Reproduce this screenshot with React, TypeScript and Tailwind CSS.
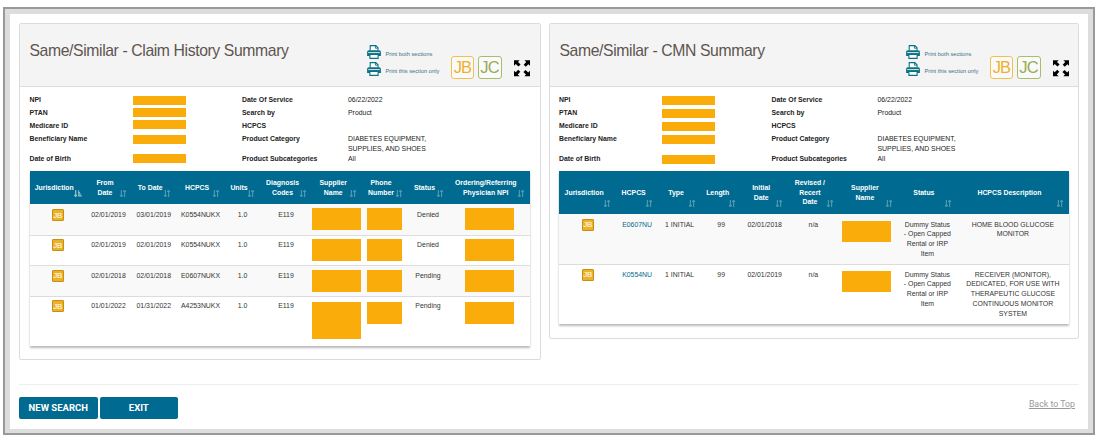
import { type ReactNode } from "react";

function PrinterIcon() {
  return (
    <svg viewBox="0 0 14 14" className="block h-[14px] w-[14px] shrink-0">
      <path d="M3.2 5.4V.6h5.6l2.2 2.2v2.6" fill="#fff" stroke="#0b7285" strokeWidth="1.1" />
      <path d="M8.4.8v2.4h2.4" fill="none" stroke="#0b7285" strokeWidth=".9" />
      <path d="M1.8 5.2h10.4a1.7 1.7 0 0 1 1.7 1.7v4H.1v-4a1.7 1.7 0 0 1 1.7-1.7z" fill="#0b7285" />
      <path d="M1.2 7.6h11.6" stroke="#f4f4f4" strokeWidth=".9" />
      <path d="M2.9 9.4h8.2v4H2.9z" fill="#fff" stroke="#0b7285" strokeWidth="1.1" />
    </svg>
  );
}

function ExpandIcon() {
  return (
    <svg viewBox="0 0 16 16" className="block h-[16.5px] w-[16px] shrink-0 fill-black">
      {[0, 90, 180, 270].map((angle) => (
        <g key={angle} transform={`rotate(${angle} 8 8)`}>
          <path d="M0 0h5.6L4 1.7l2.6 2.5-2.2 2.1L1.8 3.8 0 5.6z" />
        </g>
      ))}
    </svg>
  );
}

function SortIcon({ active = false }: { active?: boolean }) {
  return active ? (
    <svg viewBox="0 0 8 7" className="absolute right-[3.5px] bottom-[7px] h-[7px] w-[8px] opacity-60" fill="none" stroke="#fff">
      <path d="M1.7 0v6.3M.4 5l1.3 1.4L3 5" strokeWidth="1.2" />
      <path d="M4 .8h1M4 2.5h1.8M4 4.2h2.8M4 5.9h3.8" strokeWidth="1.3" />
    </svg>
  ) : (
    <svg viewBox="0 0 8 7" className="absolute right-[5px] bottom-[7px] h-[7px] w-[8px] opacity-30" fill="none" stroke="#fff" strokeWidth="1.2">
      <path d="M2.4 0v6.4M1 5.2l1.4 1.3 1.4-1.3M5.6 7V.6M4.2 1.8L5.6.5 7 1.8" />
    </svg>
  );
}

function Badge() {
  return (
    <span className="-mt-[1px] flex h-[12px] w-[12px] items-center justify-center rounded-[1px] border border-[#c98f12] bg-[#edb125] pt-[1px] text-[8px] leading-none tracking-[-0.2px] text-white">
      JB
    </span>
  );
}

function PanelHeader({ title, iconsWidth }: { title: string; iconsWidth: string }) {
  return (
    <div className="flex h-[63px] items-start justify-between border-b border-[#dcdcdc] bg-[#f4f4f4] pl-[9.5px]">
      <h2 className="mt-[17px] text-[15.75px] leading-[20px] tracking-[-0.39px] whitespace-nowrap text-[#5d5550]">{title}</h2>
      <div className={`flex shrink-0 ${iconsWidth}`}>
        <div className="mt-[21px] flex w-[84px] flex-col gap-[2.5px] text-[5.7px] leading-[14px] text-[#3d6f86]">
          <div className="flex h-[14px] gap-[4.5px] whitespace-nowrap">
            <PrinterIcon />
            <span className="pt-[2px]">Print both sections</span>
          </div>
          <div className="flex h-[14px] gap-[4.5px] whitespace-nowrap">
            <PrinterIcon />
            <span className="pt-[2px]">Print this section only</span>
          </div>
        </div>
        <span className="mt-[32px] flex h-[23px] w-[23px] items-center justify-center rounded-[3px] border border-[#f3c04f] bg-[#fafafa] text-[16.5px] leading-none tracking-[-0.8px] text-[#f0b02c]">
          JB
        </span>
        <span className="mt-[32px] ml-[3.5px] flex h-[23px] w-[24px] items-center justify-center rounded-[3px] border border-[#a9bd68] bg-[#fafafa] text-[16.5px] leading-none tracking-[-0.8px] text-[#98ab55]">
          JC
        </span>
        <div className="mt-[36px] ml-[12px]">
          <ExpandIcon />
        </div>
      </div>
    </div>
  );
}

type InfoRow = { label: string; bar: string; label2: string; value: string; height: string };

function Info({ rows }: { rows: InfoRow[] }) {
  return (
    <div className="h-[84px] pt-[8px] pl-[9.5px] text-[6.9px] leading-[9.75px] text-[#222]">
      {rows.map((r) => (
        <div key={r.label} className={`grid grid-cols-[103px_109.5px_106px_90px] ${r.height}`}>
          <b>{r.label}</b>
          <span className={`h-[9px] w-[53px] bg-[#f9ac0a] ${r.bar}`} />
          <b>{r.label2}</b>
          <span className="whitespace-pre">{r.value}</span>
        </div>
      ))}
    </div>
  );
}

function infoRows(bars: string[]): InfoRow[] {
  return [
    { label: "NPI", bar: bars[0], label2: "Date Of Service", value: "06/22/2022", height: "h-[13px]" },
    { label: "PTAN", bar: bars[1], label2: "Search by", value: "Product", height: "h-[13px]" },
    { label: "Medicare ID", bar: bars[2], label2: "HCPCS", value: "", height: "h-[13px]" },
    {
      label: "Beneficiary Name",
      bar: bars[3],
      label2: "Product Category",
      value: "DIABETES EQUIPMENT,\nSUPPLIES, AND SHOES",
      height: "h-[20px]",
    },
    { label: "Date of Birth", bar: bars[4], label2: "Product Subcategories", value: "All", height: "h-[17px]" },
  ];
}

function HeadRow({ heads, cols, height, sorted }: { heads: string[]; cols: string; height: string; sorted?: number }) {
  return (
    <div className={`grid bg-[#006a90] ${cols} ${height}`}>
      {heads.map((h, i) => (
        <div
          key={h}
          className="relative flex items-center justify-center pr-[7px] text-center text-[6.9px] leading-[9.75px] font-bold whitespace-pre text-white"
        >
          {h}
          <SortIcon active={i === sorted} />
        </div>
      ))}
    </div>
  );
}

function Cell({ children, className = "pt-[5.5px]" }: { children: ReactNode; className?: string }) {
  return <div className={`flex items-start justify-center text-center whitespace-pre ${className}`}>{children}</div>;
}

const claimCols = "grid-cols-[55.5px_46px_44.5px_49px_35px_52px_49.5px_46px_41px_81.5px]";
const cmnCols = "grid-cols-[56.5px_42.5px_42.5px_40.5px_46.5px_51px_59px_59px_112px]";

const claims = [
  { cells: ["02/01/2019", "03/01/2019", "K0554NUKX", "1.0", "E119"], status: "Denied", row: "h-[30.5px] bg-[#f9f9f9]", box: "h-[22px]", pad: "pt-[4px]", text: "pt-[6px]" },
  { cells: ["02/01/2019", "02/01/2019", "K0554NUKX", "1.0", "E119"], status: "Denied", row: "h-[30.5px] border-t", box: "h-[22px]", pad: "pt-[3.5px]", text: "pt-[4.5px]" },
  { cells: ["02/01/2018", "02/01/2018", "E0607NUKX", "1.0", "E119"], status: "Pending", row: "h-[30.5px] border-t bg-[#f9f9f9]", box: "h-[22px]", pad: "pt-[4px]", text: "pt-[4.5px]" },
  { cells: ["01/01/2022", "01/31/2022", "A4253NUKX", "1.0", "E119"], status: "Pending", row: "h-[50px] border-t", box: "h-[37.5px]", pad: "pt-[5px]", text: "pt-[4.5px]" },
];

const cmns = [
  {
    code: "E0607NU",
    date: "02/01/2018",
    description: "HOME BLOOD GLUCOSE\nMONITOR",
    row: "h-[50px] bg-[#f9f9f9]",
    text: "pt-[5.5px]",
    pad: "pt-[6.5px] pr-[4px]",
  },
  {
    code: "K0554NU",
    date: "02/01/2019",
    description: "RECEIVER (MONITOR),\nDEDICATED, FOR USE WITH\nTHERAPEUTIC GLUCOSE\nCONTINUOUS MONITOR\nSYSTEM",
    row: "h-[60px] border-t",
    text: "pt-[4.7px]",
    pad: "pt-[5.5px] pr-[4px]",
  },
];

export default function App() {
  return (
    <div className="h-[440px] w-[1100px] bg-white pt-[7px] pl-[3px] font-['Liberation_Sans',Arial,sans-serif]">
      <div className="h-[428px] w-[1092px] border-2 border-[#999] bg-white">
        <div className="h-[424px] w-[1088px] border-[5px] border-b-[4px] border-[#ddd] px-[9px] pt-[9px]">
          <div className="flex h-[362px] items-start gap-[8px] border-b border-[#eee]">
            <section className="h-[337px] w-[522px] rounded-[2px] border border-[#dcdcdc]">
              <PanelHeader title="Same/Similar - Claim History Summary" iconsWidth="w-[173px]" />
              <Info rows={infoRows(["mt-[1px] ml-[0.5px]", "mt-0 ml-[0.5px]", "-mt-[1px] ml-[0.5px]", "mt-[0.5px] ml-[0.5px]", "mt-0 ml-[0.5px]"])} />
              <div className="ml-[10px] h-[174.5px] w-[500px] shadow-[0_2px_2px_#bbb]">
                <HeadRow
                  cols={claimCols}
                  height="h-[33px]"
                  sorted={0}
                  heads={["Jurisdiction", "From\nDate", "To Date", "HCPCS", "Units", "Diagnosis\nCodes", "Supplier\nName", "Phone\nNumber", "Status", "Ordering/Referring\nPhysician NPI"]}
                />
                {claims.map((c, i) => (
                  <div key={i} className={`grid border-[#dcdcdc] text-[6.9px] leading-[9.75px] text-[#333] ${claimCols} ${c.row}`}>
                    <Cell className={c.text}>
                      <Badge />
                    </Cell>
                    {c.cells.map((t, j) => (
                      <Cell key={j} className={c.text}>
                        {t}
                      </Cell>
                    ))}
                    <Cell className={c.pad}>
                      <span className={`w-[49px] shrink-0 bg-[#f9ac0a] ${c.box}`} />
                    </Cell>
                    <Cell className={c.pad}>
                      <span className="h-[22px] w-[35.5px] bg-[#f9ac0a]" />
                    </Cell>
                    <Cell className={c.text}>{c.status}</Cell>
                    <Cell className={c.pad}>
                      <span className="h-[22px] w-[49px] bg-[#f9ac0a]" />
                    </Cell>
                  </div>
                ))}
              </div>
            </section>

            <section className="h-[316px] w-[530px] rounded-[2px] border border-[#dcdcdc]">
              <PanelHeader title="Same/Similar - CMN Summary" iconsWidth="w-[172px]" />
              <div className="-ml-[0.5px]">
                <Info rows={infoRows(["mt-[1px]", "mt-[1px]", "mt-[1px]", "mt-[1px]", "mt-[1px]"])} />
              </div>
              <div className="ml-[9.4px] h-[152.5px] w-[510px] shadow-[0_2px_2px_#bbb]">
                <HeadRow
                  cols={cmnCols}
                  height="h-[43px]"
                  heads={["Jurisdiction", "HCPCS", "Type", "Length", "Initial\nDate", "Revised /\nRecert\nDate", "Supplier\nName", "Status", "HCPCS Description"]}
                />
                {cmns.map((c) => (
                  <div key={c.code} className={`grid border-[#dcdcdc] text-[6.9px] leading-[9.75px] text-[#333] ${cmnCols} ${c.row}`}>
                    <Cell className={c.text}>
                      <Badge />
                    </Cell>
                    <Cell className={c.text}>
                      <a className="text-[#006a90]">{c.code}</a>
                    </Cell>
                    <Cell className={c.text}>1 INITIAL</Cell>
                    <Cell className={c.text}>99</Cell>
                    <Cell className={c.text}>{c.date}</Cell>
                    <Cell className={c.text}>n/a</Cell>
                    <Cell className={c.pad}>
                      <span className="h-[21.5px] w-[49px] bg-[#f9ac0a]" />
                    </Cell>
                    <Cell className={c.text}>{"Dummy Status\n- Open Capped\nRental or IRP\nItem"}</Cell>
                    <Cell className={c.text}>{c.description}</Cell>
                  </div>
                ))}
              </div>
            </section>
          </div>

          <div className="flex items-start gap-[2px] pt-[12px] font-['Roboto',sans-serif]">
            <button className="h-[22px] w-[78.5px] rounded-[2px] bg-[#006a90] text-[9.5px] leading-[20px] font-bold text-white">NEW SEARCH</button>
            <button className="h-[22px] w-[78.5px] rounded-[2px] bg-[#006a90] text-[9.5px] leading-[20px] font-bold text-white">EXIT</button>
            <a className="mr-[4px] ml-auto pt-[0.5px] text-[8.8px] leading-[13px] text-[#999] underline">Back to Top</a>
          </div>
        </div>
      </div>
    </div>
  );
}
